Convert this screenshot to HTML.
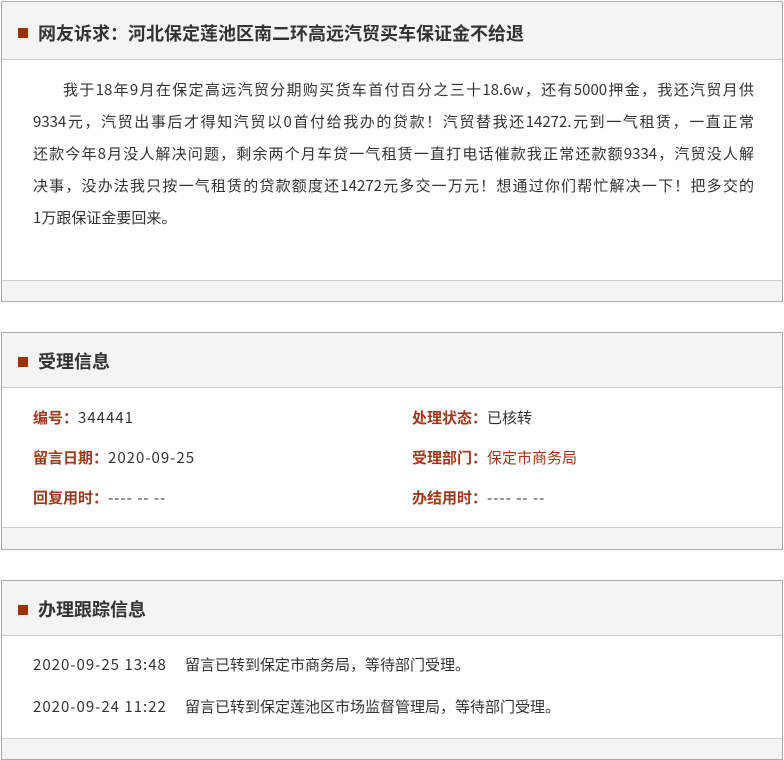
<!DOCTYPE html>
<html><head><meta charset="utf-8"><style>
*{margin:0;padding:0;box-sizing:border-box}
body{width:784px;height:744px;background:#fff;font-family:"Noto Sans CJK SC","Liberation Sans",sans-serif;color:#333;position:relative;overflow:hidden}
.box{position:absolute;left:1px;width:782px;border:1px solid #aaa;background:#fff;overflow:hidden}
.hd{position:absolute;left:0;top:0;right:0;background:#f4f4f4;border-bottom:1px solid #ccc}
.hd i{position:absolute;left:16px;width:10px;height:10px;background:#9b3300}
.hd b{position:absolute;left:36px;font-size:18px;line-height:24px;color:#333;white-space:nowrap}
.ft{position:absolute;left:0;right:0;bottom:0;background:#f4f4f4;border-top:1px solid #ccc}
.t{position:absolute;font-size:15px;line-height:22px;white-space:nowrap}
.l{color:#9b3a1a;font-weight:bold}
.n{letter-spacing:1px}
.p{position:absolute;left:31px;width:721px;font-size:15px;line-height:32px;color:#333}
.p div{text-align:justify;text-align-last:justify;white-space:nowrap}
.p div.last{text-align-last:left}
</style></head><body>
<div class="box" style="top:1px;height:301px">
 <div class="hd" style="height:58px"><i style="top:26px"></i><b style="top:19px">网友诉求：河北保定莲池区南二环高远汽贸买车保证金不给退</b></div>
 <div class="p" style="top:72px">
 <div style="padding-left:30px">我于18年9月在保定高远汽贸分期购买货车首付百分之三十18.6w，还有5000押金，我还汽贸月供</div>
 <div>9334元，汽贸出事后才得知汽贸以0首付给我办的贷款！汽贸替我还14272.元到一气租赁，一直正常</div>
 <div>还款今年8月没人解决问题，剩余两个月车贷一气租赁一直打电话催款我正常还款额9334，汽贸没人解</div>
 <div>决事，没办法我只按一气租赁的贷款额度还14272元多交一万元！想通过你们帮忙解决一下！把多交的</div>
 <div class="last">1万跟保证金要回来。</div>
 </div>
 <div class="ft" style="height:21px"></div>
</div>
<div class="box" style="top:332px;height:218px">
 <div class="hd" style="height:55px"><i style="top:24px"></i><b style="top:16px">受理信息</b></div>
 <div class="t" style="left:31px;top:74px"><span class="l">编号：</span><span class="n">344441</span></div>
 <div class="t" style="left:410px;top:74px"><span class="l">处理状态：</span>已核转</div>
 <div class="t" style="left:31px;top:114px"><span class="l">留言日期：</span><span class="n">2020-09-25</span></div>
 <div class="t" style="left:410px;top:114px"><span class="l">受理部门：</span><span style="color:#9b3a1a">保定市商务局</span></div>
 <div class="t" style="left:31px;top:154px"><span class="l">回复用时：</span><span class="n">---- -- --</span></div>
 <div class="t" style="left:410px;top:154px"><span class="l">办结用时：</span><span class="n">---- -- --</span></div>
 <div class="ft" style="height:22px"></div>
</div>
<div class="box" style="top:580px;height:180px">
 <div class="hd" style="height:55px"><i style="top:24px"></i><b style="top:16px">办理跟踪信息</b></div>
 <div class="t n" style="left:31px;top:73px">2020-09-25 13:48</div>
 <div class="t" style="left:183px;top:73px">留言已转到保定市商务局，等待部门受理。</div>
 <div class="t n" style="left:31px;top:115px">2020-09-24 11:22</div>
 <div class="t" style="left:183px;top:115px">留言已转到保定莲池区市场监督管理局，等待部门受理。</div>
 <div class="ft" style="top:157px;height:30px"></div>
</div>
</body></html>
